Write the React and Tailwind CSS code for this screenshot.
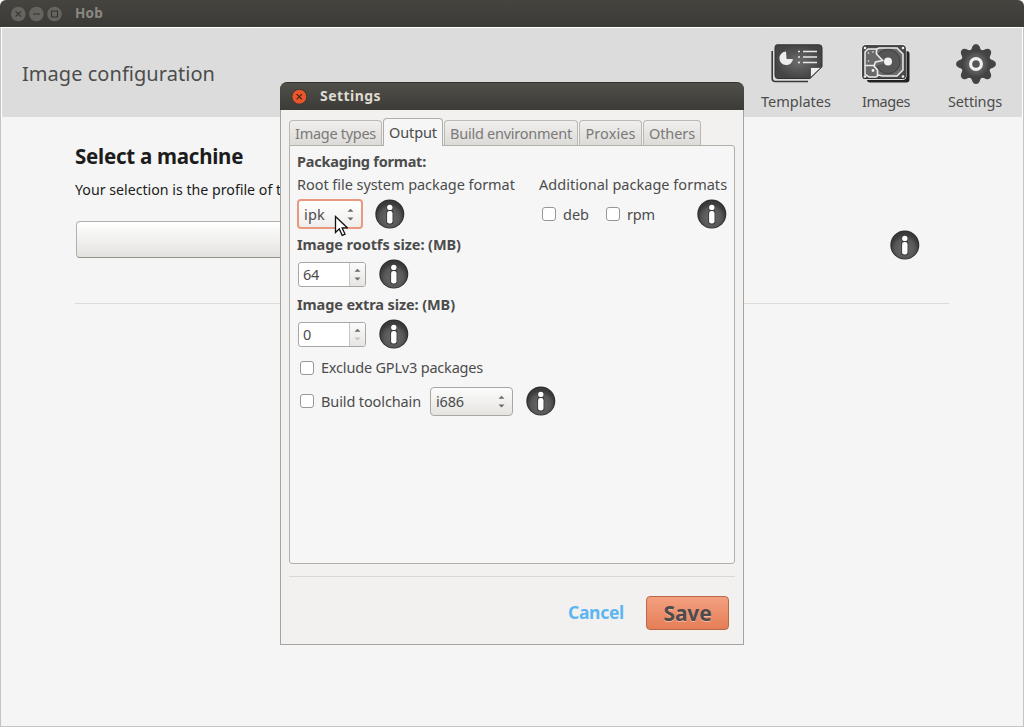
import React from "react";

function T({ className = "", children }) {
  return <span className={"inline-block whitespace-nowrap " + className}>{children}</span>;
}

function Info() {
  return (
    <svg className="h-[30px] w-[30px] shrink-0" viewBox="0 0 30 30">
      <defs>
        <radialGradient id="info" cx="50%" cy="62%" r="52%">
          <stop offset="0" stopColor="#6c6c6c" />
          <stop offset="0.7" stopColor="#585858" />
          <stop offset="1" stopColor="#3c3c3c" />
        </radialGradient>
      </defs>
      <circle cx="14.8" cy="15" r="14.5" fill="#303030" />
      <circle cx="14.8" cy="15.4" r="13.3" fill="url(#info)" />
      <circle cx="14.8" cy="8.6" r="3.4" fill="#3a3a3a" />
      <rect x="11.2" y="11" width="7.2" height="14.4" rx="3" fill="#3a3a3a" />
      <circle cx="14.8" cy="8.4" r="2.7" fill="#fff" />
      <rect x="12.1" y="12" width="5.4" height="12.6" rx="2.3" fill="#fff" />
    </svg>
  );
}

function Arrows({ dim = false }) {
  return (
    <svg className="h-[14px] w-[7px] shrink-0" viewBox="0 0 7 14">
      <path d="M.5 4.7 3.5 1.7 6.5 4.7z" fill="#6a6a6a" />
      <path d="M.5 10.5 3.5 13.5 6.5 10.5z" fill={dim ? "#c4c4c4" : "#6a6a6a"} />
    </svg>
  );
}

const Check = () => <span className="h-[14px] w-[14px] shrink-0 rounded-[3px] border border-[#999793] bg-white" />;

function Spin({ value, dim }) {
  return (
    <div className="ml-px flex h-[25px] w-[68px] overflow-hidden rounded-[3px] border border-[#aaa7a3] bg-white">
      <div className="flex w-[50px] items-center pl-[4px]"><T className="tracking-[-0.3px]">{value}</T></div>
      <div className="flex flex-1 items-center justify-center border-l border-[#c9c6c2] bg-linear-to-b from-[#fbfbfb] to-[#e6e5e3]">
        <Arrows dim={dim} />
      </div>
    </div>
  );
}

const tab = "flex h-[25px] items-center justify-center rounded-t-[4px] border border-b-0 border-[#bcb9b5] bg-linear-to-b from-[#f0efed] to-[#dddbd8] pt-px text-[#7a7a78]";

export default function App() {
  return (
    <div className="relative flex h-[727px] w-[1024px] flex-col overflow-hidden bg-[#f5f5f5] font-['Noto_Sans',sans-serif] text-[14.5px] leading-none text-[#4c4c4c]">
      <div className="flex h-[27px] items-center rounded-t-[6px] bg-linear-to-b from-[#45443f] to-[#3b3a36] pl-[11px]">
        <svg className="h-4 w-[52px]" viewBox="0 0 52 16">
          <g fill="#66645e"><circle cx="7.3" cy="8" r="7.3" /><circle cx="25.4" cy="8" r="7.3" /><circle cx="43.5" cy="8" r="7.3" /></g>
          <path d="M4.6 5.3 10 10.7M10 5.3 4.6 10.7M22 8h7M40.5 5h6v6h-6z" fill="none" stroke="#34332f" strokeWidth="1.1" />
        </svg>
        <T className="ml-3 text-[13.5px] font-bold tracking-[0.23px] text-[#8b8982]">Hob</T>
      </div>
      <div className="flex flex-1 flex-col border border-[#c4c4c4] border-t-white">
        <div className="flex h-[89px] border-x border-white bg-[#dcdcdc]">
          <div className="flex flex-1 items-center pt-[2px] pl-5"><T className="text-[20px] tracking-[0.04px]">Image configuration</T></div>
          <div className="flex w-[88px] flex-col items-center pt-[16px] pl-[4px]">
            <svg className="ml-[2px] h-10 w-[52px]" viewBox="0 0 52 40">
              <defs><radialGradient id="dk"><stop offset="0" stopColor="#6c6c6c" /><stop offset="1" stopColor="#444" /></radialGradient></defs>
              <path d="M1.2 7v27.5q0 3 3 3H37" fill="none" stroke="#383838" strokeWidth="1.6" />
              <path d="M6 .8h42q3 0 3 3v19L39 34.5H7q-3 0-3-3v-28Q4 .8 6 .8z" fill="url(#dk)" stroke="#303030" />
              <path d="M39.5 33.5V23.5H50z" fill="#efefef" stroke="#444" strokeWidth=".8" />
              <path d="M15 7.5a6.8 6.8 0 1 0 7 7.4h-6.4z" fill="#ececec" />
              <path d="M27 7.5h2M27 13h2M27 18.5h2M32 7.5h14M32 13h14M32 18.5h14" stroke="#e8e8e8" strokeWidth="1.5" />
            </svg>
            <T className="mt-[10px]">Templates</T>
          </div>
          <div className="flex w-[92px] flex-col items-center pt-[16px] pl-[4px]">
            <svg className="h-10 w-[50px]" viewBox="0 0 50 40">
              <rect x="6" y="7" width="42.5" height="31.5" rx="3" fill="#222" />
              <rect x="1" y="1" width="44" height="34.5" rx="3" fill="#444" stroke="#f0f0f0" />
              <rect x="1.8" y="1.8" width="42.4" height="32.8" rx="2" fill="#4a4a4a" stroke="#333" />
              <path d="M7 5h9l2-1h18l6 6v16l-6 6H21l-3-1-3 2H8l-4-3V8z" fill="#6a6a6a" stroke="#ececec" strokeWidth="1.5" />
              <circle cx="27" cy="17.5" r="12.2" fill="#565656" stroke="#3e3e3e" />
              <path d="M12 9l15 8.500-15 6z" fill="#6a6a6a" />
              <path d="M15.500 5v5l6 6.500-7 1.500-1.500 4 3.500 4v6M4 21.500h9" fill="none" stroke="#ececec" strokeWidth="1.6" />
              <circle cx="27" cy="17.5" r="4" fill="#f0f0f0" />
              <g fill="#f2f2f2"><circle cx="4" cy="4" r="1.3" /><circle cx="42" cy="4" r="1.3" /><circle cx="4" cy="32.5" r="1.3" /><circle cx="42" cy="32.5" r="1.3" /><circle cx="12" cy="8" r=".8" /><circle cx="7.5" cy="9" r=".8" /><circle cx="7.500" cy="17" r=".8" /><circle cx="12" cy="26.5" r="1.4" /></g>
            </svg>
            <T className="mt-[10px] tracking-[-0.44px]">Images</T>
          </div>
          <div className="flex w-[92px] flex-col items-center pt-[16px] pr-[4px]">
            <svg className="ml-[3px] h-10 w-10" viewBox="-20 -20 40 40">
              <defs><radialGradient id="gear"><stop offset="0" stopColor="#707070" /><stop offset=".6" stopColor="#5c5c5c" /><stop offset="1" stopColor="#404040" /></radialGradient></defs>
              <g fill="#434343">
                <path id="teeth" d="M-9-12Q-4.500-13-3.600-17.500Q-2.500-20 0-20T3.600-17.500Q4.500-13 9-12L12-9Q13-4.500 17.500-3.600Q20-2.500 20 0T17.500 3.600Q13 4.500 12 9L9 12Q4.500 13 3.600 17.500Q2.500 20 0 20T-3.600 17.500Q-4.500 13-9 12L-12 9Q-13 4.500-17.500 3.600Q-20 2.500-20 0T-17.500-3.600Q-13-4.500-12-9z" />
                <use href="#teeth" transform="rotate(45)" />
              </g>
              <circle r="14" fill="url(#gear)" />
              <circle r="5.4" fill="#555" stroke="#f0f0f0" strokeWidth="3.2" />
            </svg>
            <T className="mt-[10px] ml-[2px] tracking-[-0.15px]">Settings</T>
          </div>
        </div>
        <div className="flex flex-col pt-[29px] pl-[74px]">
          <T className="self-start text-[20.5px] font-bold tracking-[-0.25px] text-[#1c1c1c]">Select a machine</T>
          <T className="mt-[16px] self-start text-[14.2px] text-[#1c1c1c]">Your selection is the profile of t</T>
          <div className="mt-[24px] flex h-[38px] w-[845px] items-center justify-between">
            <div className="ml-px h-[37px] w-[600px] rounded-[4px] border border-[#b4b1ad] border-b-[#94918d] bg-linear-to-b from-white to-[#e3e2df]" />
            <div className="pt-[10px]"><Info /></div>
          </div>
          <div className="mt-[44px] h-px w-[874px] bg-[#dcdbd9]" />
        </div>
      </div>

      <div className="absolute left-[280px] top-[82px] flex h-[563px] w-[464px] flex-col">
        <div className="flex h-[28px] items-center rounded-t-[7px] border-t border-[#33322e] bg-linear-to-b from-[#504f49] to-[#3c3b37] pl-[11px]">
          <svg className="h-4 w-4" viewBox="0 0 16 16">
            <circle cx="8.3" cy="7.7" r="7.5" fill="#e8572b" stroke="#35342f" />
            <path d="M5.7 5.1 10.9 10.3M10.9 5.1 5.7 10.3" stroke="#4a2013" strokeWidth="1.2" />
          </svg>
          <T className="mb-[2px] ml-[13px] text-[14px] font-bold tracking-[0.45px] text-[#dfdbd2]">Settings</T>
        </div>
        <div className="flex flex-1 flex-col border border-t-0 border-[#a5a3a0] bg-[#f2f1f0] px-2 pt-[8px]">
          <div className="flex h-[27px] items-end gap-px">
            <div className={tab + " w-[93px]"}><T className="tracking-[-0.29px]">Image types</T></div>
            <div className="z-10 -mb-px flex h-[28px] w-[60px] items-center justify-center rounded-t-[4px] border border-b-0 border-[#b0ada9] bg-[#f6f6f6]"><T className="tracking-[-0.11px]">Output</T></div>
            <div className={tab + " w-[134px]"}><T className="tracking-[-0.25px]">Build environment</T></div>
            <div className={tab + " w-[63px]"}><T className="tracking-[0.07px]">Proxies</T></div>
            <div className={tab + " w-[58px]"}><T className="tracking-[-0.11px]">Others</T></div>
          </div>
          <div className="flex h-[419px] flex-col rounded-[3px] rounded-tl-none border border-[#b3b0ac] bg-[#f6f6f6] pt-[4px] pl-[7px]">
            <div className="flex h-[22px] items-center"><T className="font-bold tracking-[-0.24px]">Packaging format:</T></div>
            <div className="flex h-[24px] items-center"><T className="w-[218px] tracking-[-0.05px]">Root file system package format</T><T className="ml-6 tracking-[0.02px]">Additional package formats</T></div>
            <div className="flex h-[34px] items-center pt-[2px]">
              <div className="flex h-[30px] w-[66px] items-center justify-between rounded-[4px] border-2 border-[#e9997d] bg-linear-to-b from-white to-[#efeeec] pr-[7px] pl-[5px]"><T className="tracking-[0.2px]">ipk</T><Arrows /></div>
              <div className="ml-[12px] flex"><Info /></div>
              <div className="ml-[137px] flex w-[47px] items-center"><Check /><T className="ml-[7px]">deb</T></div>
              <div className="ml-[17px] flex w-[49px] items-center"><Check /><T className="ml-[7px] tracking-[-0.16px]">rpm</T></div>
              <div className="ml-[42px] flex"><Info /></div>
            </div>
            <div className="flex h-[28px] items-center"><T className="font-bold tracking-[-0.08px]">Image rootfs size: (MB)</T></div>
            <div className="flex h-[32px] items-center gap-[13px]"><Spin value="64" /><Info /></div>
            <div className="flex h-[29px] items-center"><T className="font-bold tracking-[-0.1px]">Image extra size: (MB)</T></div>
            <div className="flex h-[30px] items-center gap-[13px]"><Spin value="0" dim /><Info /></div>
            <div className="flex h-[37px] items-center pl-[3px]"><Check /><T className="ml-[7px] tracking-[-0.19px]">Exclude GPLv3 packages</T></div>
            <div className="flex h-[30px] items-center pl-[3px]">
              <Check /><T className="ml-[7px] w-[100px] tracking-[-0.12px]">Build toolchain</T>
              <div className="ml-[9px] flex h-[29px] w-[83px] items-center justify-between rounded-[4px] border border-[#aaa7a3] bg-linear-to-b from-[#fcfcfc] to-[#e5e4e1] pr-[7px] pl-[5px]"><T className="tracking-[-0.16px]">i686</T><Arrows /></div>
              <div className="ml-[13px] flex"><Info /></div>
            </div>
          </div>
          <div className="mt-[12px] h-px bg-[#d9d7d4]" />
          <div className="mt-[19px] flex items-center justify-end pr-[6px]">
            <T className="mr-[22px] text-[17.5px] font-bold tracking-[-0.3px] text-[#5cb6f2]">Cancel</T>
            <div className="flex h-[34px] w-[83px] items-center justify-center rounded-[4px] border border-[#b86948] bg-linear-to-b from-[#f3a080] to-[#e57e57]"><T className="text-[21px] font-bold tracking-[-0.17px] [text-shadow:0_1px_0_#f6b79f]">Save</T></div>
          </div>
        </div>
      </div>
      <svg className="absolute left-[334px] top-[215px] h-[22px] w-[14px]" viewBox="0 0 14 22">
        <path d="M1.5 1.5v16l3.8-3.6 2.9 6.4 2.8-1.2-2.9-6.3h5.2z" fill="#fff" stroke="#111" strokeWidth="1.3" />
      </svg>
    </div>
  );
}
